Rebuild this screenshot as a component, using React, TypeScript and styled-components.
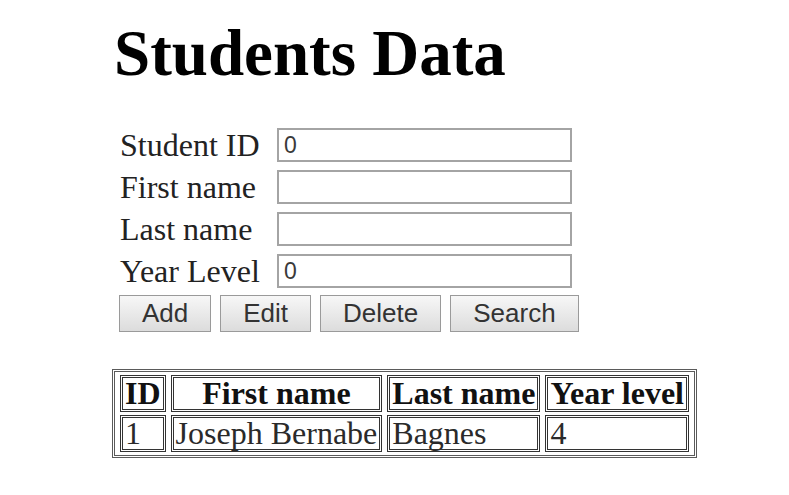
import React from "react";
import styled, { createGlobalStyle } from "styled-components";

const GlobalStyle = createGlobalStyle`
  html, body {
    margin: 0;
    padding: 0;
    background: #ffffff;
  }
  body {
    font-family: "Liberation Serif", "Times New Roman", serif;
    color: #111;
  }
`;

const Page = styled.div`
  width: 789px;
  height: 495px;
  box-sizing: border-box;
  padding: 17px 0 0 112px;
  overflow: hidden;
`;

const Title = styled.h1`
  margin: 0 0 0 2px;
  font-family: "Liberation Serif", "Times New Roman", serif;
  font-weight: 700;
  font-size: 65px;
  line-height: 73px;
  color: #000;
`;

const Form = styled.div`
  margin: 38px 0 0 8px;
  display: grid;
  grid-template-columns: 157px 295px;
  grid-auto-rows: 34px;
  row-gap: 8px;
  align-items: center;
`;

const Label = styled.label`
  font-family: "Liberation Serif", "Times New Roman", serif;
  font-size: 32px;
  line-height: 34px;
  color: #222;
  white-space: nowrap;
`;

const Input = styled.input`
  box-sizing: border-box;
  width: 295px;
  height: 34px;
  margin: 0;
  padding: 0 5px;
  border: 2px solid #a4a4a4;
  background: #fff;
  font-family: "Liberation Sans", Arial, sans-serif;
  font-size: 23px;
  color: #3a3a3a;
  outline: none;
`;

const ButtonRow = styled.div`
  margin: 7px 0 0 7px;
  display: flex;
  gap: 9px;
`;

const Button = styled.button`
  box-sizing: border-box;
  height: 37px;
  margin: 0;
  padding: 0 22px;
  border: 1px solid #9a9a9a;
  border-radius: 0;
  background: linear-gradient(#f7f7f7, #dcdcdc);
  font-family: "Liberation Sans", Arial, sans-serif;
  font-size: 26px;
  line-height: 35px;
  color: #333;
  cursor: pointer;
`;

const Table = styled.table`
  margin-top: 37px;
  border: 3px double #5a5a5a;
  border-spacing: 5px 3px;
  background: #fff;
`;

const Th = styled.th`
  border: 3px double #333;
  padding: 0 2px;
  font-family: "Liberation Serif", "Times New Roman", serif;
  font-size: 32px;
  line-height: 31px;
  font-weight: 700;
  color: #111;
  white-space: nowrap;
`;

const Td = styled.td`
  border: 3px double #333;
  padding: 0 2px;
  font-family: "Liberation Serif", "Times New Roman", serif;
  font-size: 32px;
  line-height: 31px;
  color: #2a2a2a;
  white-space: nowrap;
`;

const fields = [
  { label: "Student ID", value: "0" },
  { label: "First name", value: "" },
  { label: "Last name", value: "" },
  { label: "Year Level", value: "0" },
];

const students = [
  { id: 1, first: "Joseph Bernabe", last: "Bagnes", year: 4 },
];

export default function App() {
  return (
    <>
      <GlobalStyle />
      <Page>
        <Title>Students Data</Title>
        <Form>
          {fields.map((f) => (
            <React.Fragment key={f.label}>
              <Label>{f.label}</Label>
              <Input defaultValue={f.value} />
            </React.Fragment>
          ))}
        </Form>
        <ButtonRow>
          <Button>Add</Button>
          <Button>Edit</Button>
          <Button>Delete</Button>
          <Button>Search</Button>
        </ButtonRow>
        <Table>
          <thead>
            <tr>
              <Th>ID</Th>
              <Th>First name</Th>
              <Th>Last name</Th>
              <Th>Year level</Th>
            </tr>
          </thead>
          <tbody>
            {students.map((s) => (
              <tr key={s.id}>
                <Td>{s.id}</Td>
                <Td>{s.first}</Td>
                <Td>{s.last}</Td>
                <Td>{s.year}</Td>
              </tr>
            ))}
          </tbody>
        </Table>
      </Page>
    </>
  );
}
